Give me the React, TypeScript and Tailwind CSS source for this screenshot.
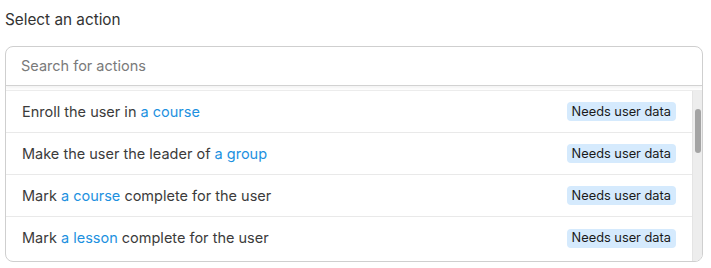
import React from 'react';

type Part = { text: string; link?: boolean };

const actions: Part[][] = [
  [{ text: 'Enroll the user in ' }, { text: 'a course', link: true }],
  [{ text: 'Make the user the leader of ' }, { text: 'a group', link: true }],
  [{ text: 'Mark ' }, { text: 'a course', link: true }, { text: ' complete for the user' }],
  [{ text: 'Mark ' }, { text: 'a lesson', link: true }, { text: ' complete for the user' }],
];

const ActionRow: React.FC<{ parts: Part[]; last?: boolean }> = ({ parts, last }) => (
  <div
    className={`h-[42px] shrink-0 flex items-center justify-between pl-[16px] pr-[16px] ${
      last ? '' : 'border-b border-[#e9e9e9]'
    }`}
  >
    <span className="text-[14.5px] text-[#3b3b3b]">
      {parts.map((p, i) =>
        p.link ? (
          <span key={i} className="text-[#1d91e0]">
            {p.text}
          </span>
        ) : (
          <span key={i}>{p.text}</span>
        )
      )}
    </span>
    <span className="h-[19px] px-[5px] flex items-center rounded-[4px] bg-[#d5eafd] text-[12.8px] text-[#1a1a1a]">
      Needs user data
    </span>
  </div>
);

const App: React.FC = () => {
  return (
    <div className="w-[711px] h-[268px] bg-white font-['Inter',sans-serif] pl-[5px]">
      <div className="pt-[10px] h-[46px] text-[15.3px] leading-[20px] text-[#333333]">Select an action</div>

      <div className="w-[698px] h-[216px] border border-[#cfcfcf] rounded-[8px] overflow-hidden flex flex-col">
        <div className="h-[39px] shrink-0 flex items-center px-[15px] border-b border-[#d2d2d2] shadow-[0_2px_3px_rgba(0,0,0,0.05)] z-10">
          <span className="text-[14.5px] text-[#7a7a7a]">Search for actions</span>
        </div>

        <div className="flex flex-1 min-h-0 mt-[4px] border-t border-[#ececec]">
          <div className="flex-1 flex flex-col overflow-hidden">
            {actions.map((a, i) => (
              <ActionRow key={i} parts={a} last={i === actions.length - 1} />
            ))}
          </div>
          <div className="w-[10px] shrink-0 bg-[#ededed] border-l border-[#e4e4e4] flex justify-center">
            <div className="w-[6px] h-[44px] mt-[18px] rounded-full bg-[#a4a4a4]" />
          </div>
        </div>
      </div>
    </div>
  );
};

export default App;
